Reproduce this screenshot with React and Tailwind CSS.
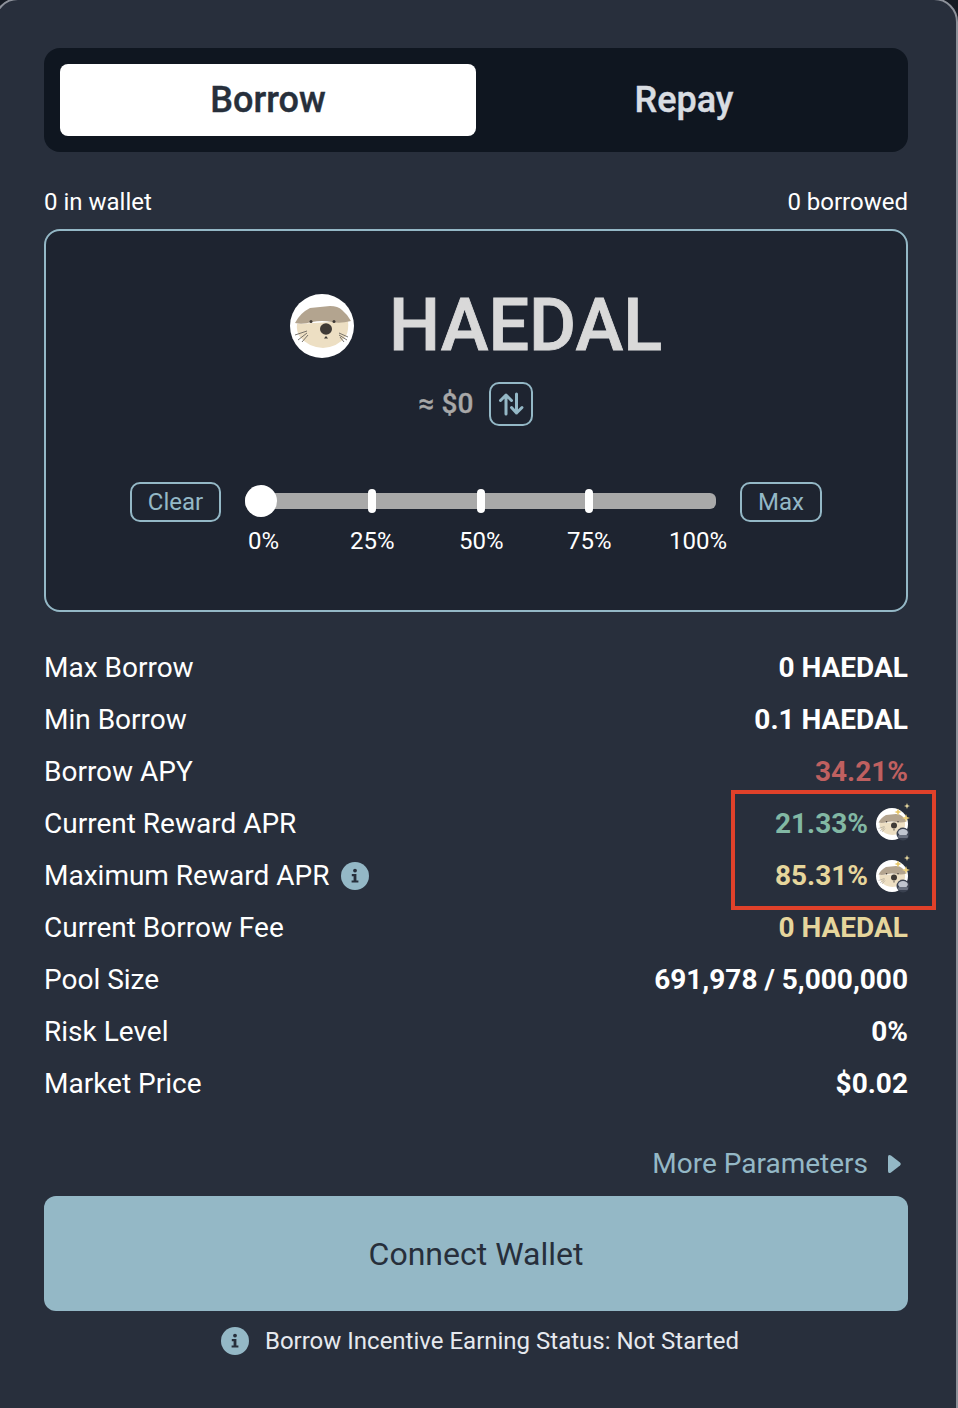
const F = { fontFamily: "Roboto, sans-serif" };

function Otter({ size, whisker = "#6a655f" }) {
  return (
    <svg width={size} height={size} viewBox="0 0 64 64" className="shrink-0 block">
      <circle cx="32" cy="32" r="32" fill="#ffffff" />
      <path d="M7 30 L58 27 Q59 36 56 42 Q48 53 33 54 Q18 53 10 43 Q6 37 7 30 Z" fill="#eddfc3" />
      <path d="M5 29 Q10 19 20 14 Q30 13 40 12 Q48 12 52 16 Q58 21 61 27 Q50 30 42 28 Q32 26 22 28 Q12 31 5 29 Z" fill="#b3a48f" />
      <circle cx="21" cy="27.5" r="1.5" fill="#3f3a36" />
      <circle cx="44" cy="27.5" r="1.5" fill="#3f3a36" />
      <ellipse cx="36" cy="35" rx="6" ry="5.8" fill="#3f3a36" />
      <path d="M34 44.5 L36 42 L38 44.5 Z" fill="#3f3a36" />
      <g stroke={whisker} strokeWidth="0.9" fill="none">
        <path d="M5 41 L17 37" />
        <path d="M8 46 L17 39" />
        <path d="M12 48 L18 41" />
        <path d="M49 39 L58 43" />
        <path d="M49 41 L57 46" />
        <path d="M50 43 L54 48" />
      </g>
    </svg>
  );
}

function RewardIcon() {
  return (
    <span className="relative block w-[32px] h-[32px] shrink-0">
      <Otter size={32} whisker="#8d877e" />
      <svg width="32" height="32" viewBox="0 0 32 32" className="absolute left-0 top-0 overflow-visible">
        <path d="M22 0.5 l1 2.5 l2.5 1 l-2.5 1 l-1 2.5 l-1 -2.5 l-2.5 -1 l2.5 -1 Z" fill="#e8c76a" />
        <path d="M30 6 l1 3 l3 1 l-3 1 l-1 3 l-1 -3 l-3 -1 l3 -1 Z" fill="#efd27a" />
        <path d="M31 -5 l0.8 2.2 l2.2 0.8 l-2.2 0.8 l-0.8 2.2 l-0.8 -2.2 l-2.2 -0.8 l2.2 -0.8 Z" fill="#e8d9a0" />
        <circle cx="27" cy="26" r="6.5" fill="#3a4150" />
        <ellipse cx="27" cy="24.5" rx="4.8" ry="3.4" fill="#c0c5cf" />
        <rect x="22" y="27" width="10" height="3" rx="1.2" fill="#6a7180" />
      </svg>
    </span>
  );
}

function InfoIcon() {
  return (
    <svg width="28" height="28" viewBox="0 0 28 28" className="shrink-0">
      <circle cx="14" cy="14" r="14" fill="#94b8c6" />
      <circle cx="14" cy="8.6" r="1.9" fill="#272f3b" />
      <path d="M10.8 12 h4.6 v6.4 h2 v2.2 h-6.8 v-2.2 h2 v-4.2 h-1.8 Z" fill="#272f3b" />
    </svg>
  );
}

function Row({ label, children, labelExtra, valueClass = "text-white" }) {
  return (
    <div className="flex h-[52px] items-center justify-between">
      <div className="flex items-center gap-[12px] text-[28px] text-white">
        <span>{label}</span>
        {labelExtra}
      </div>
      <div className={`flex items-center text-[28px] font-bold ${valueClass}`}>{children}</div>
    </div>
  );
}

function Tick({ left }) {
  return <span className="absolute top-[-4px] w-[8px] h-[24px] rounded-[4px] bg-white" style={{ left }} />;
}

export default function App() {
  return (
    <div style={F} className="relative w-[958px] h-[1408px] bg-[#161b24] overflow-hidden">
      <div className="-ml-[6px] -mt-[2px] w-[964px] h-[1440px] bg-[#282f3c] rounded-[24px] border-2 border-[#8d919a] px-[48px] pt-[48px]">
        <div className="flex p-[16px] h-[104px] rounded-[16px] bg-[#0f1620]">
          <div className="flex-1 flex items-center justify-center rounded-[8px] bg-white text-[36px] font-medium text-[#272f3b] [-webkit-text-stroke:0.4px_#272f3b]">Borrow</div>
          <div className="flex-1 flex items-center justify-center rounded-[8px] text-[36px] font-medium text-[#d9dde2] [-webkit-text-stroke:0.4px_#d9dde2]">Repay</div>
        </div>

        <div className="flex justify-between mt-[34px] h-[32px] items-center text-[24px] text-white">
          <span>0 in wallet</span>
          <span>0 borrowed</span>
        </div>

        <div className="mt-[11px] h-[383px] rounded-[16px] border-2 border-[#94b8c6] bg-[#1e2430] flex flex-col items-center">
          <div className="flex items-center gap-[35px] mt-[63px] h-[64px]">
            <Otter size={64} />
            <span className="text-[72px] font-medium text-[#d9d9d9] leading-none [-webkit-text-stroke:0.8px_#d9d9d9]">HAEDAL</span>
          </div>
          <div className="flex items-center gap-[16px] mt-[24px] text-[28px] font-medium text-[#a8a8a8] [-webkit-text-stroke:0.3px_#a8a8a8]">
            <span>≈ $0</span>
            <span className="w-[44px] h-[44px] rounded-[10px] border-2 border-[#94b8c6] flex items-center justify-center">
              <svg width="28" height="28" viewBox="0 0 28 28" fill="none" stroke="#94b8c6" strokeWidth="3" strokeLinecap="round" strokeLinejoin="round">
                <path d="M9 24 V5 M3.5 10.5 L9 5 L14.5 10.5" />
                <path d="M19.5 4 V23 M14.5 17.5 L19.5 23 L25 17.5" />
              </svg>
            </span>
          </div>
          <div className="flex items-start mt-[56px] h-[76px] w-[692px]">
            <span className="w-[91px] h-[40px] rounded-[10px] border-2 border-[#94b8c6] flex items-center justify-center text-[24px] text-[#94b8c6]">Clear</span>
            <div className="relative w-[471px] h-[72px] ml-[24px]">
              <div className="absolute left-0 right-0 top-[11px] h-[16px] rounded-[6px] bg-[#a9a9a9]">
                <Tick left={123} />
                <Tick left={232} />
                <Tick left={340} />
              </div>
              <span className="absolute left-0 top-[3px] w-[32px] h-[32px] rounded-full bg-white" />
              <div className="absolute top-[44px] left-0 right-0 text-[24px] text-white leading-[30px]">
                <span className="absolute left-[3px]">0%</span>
                <span className="absolute left-[105px]">25%</span>
                <span className="absolute left-[214px]">50%</span>
                <span className="absolute left-[322px]">75%</span>
                <span className="absolute left-[424px]">100%</span>
              </div>
            </div>
            <span className="ml-[24px] w-[82px] h-[40px] rounded-[10px] border-2 border-[#94b8c6] flex items-center justify-center text-[24px] text-[#94b8c6]">Max</span>
          </div>
        </div>

        <div className="mt-[30px]">
          <Row label="Max Borrow">0 HAEDAL</Row>
          <Row label="Min Borrow">0.1 HAEDAL</Row>
          <Row label="Borrow APY" valueClass="text-[#bf6060]">34.21%</Row>
          <Row label="Current Reward APR" valueClass="text-[#82b8a4]">
            <span>21.33%</span>
            <span className="ml-[8px]"><RewardIcon /></span>
          </Row>
          <Row label="Maximum Reward APR" labelExtra={<InfoIcon />} valueClass="text-[#e6d69c]">
            <span>85.31%</span>
            <span className="ml-[8px]"><RewardIcon /></span>
          </Row>
          <Row label="Current Borrow Fee" valueClass="text-[#e6d69c]">0 HAEDAL</Row>
          <Row label="Pool Size">691,978 / 5,000,000</Row>
          <Row label="Risk Level">0%</Row>
          <Row label="Market Price">$0.02</Row>
        </div>

        <div className="flex justify-end items-center mt-[38px] h-[32px] pr-[7px] gap-[20px] text-[28px] text-[#94b8c6]">
          <span>More Parameters</span>
          <svg width="13" height="20" viewBox="0 0 13 20"><path d="M0 3 Q0 0 3 1.5 L12 8.5 Q13.5 10 12 11.5 L3 18.5 Q0 20 0 17 Z" fill="#94b8c6" /></svg>
        </div>

        <div className="mt-[16px] h-[115px] rounded-[12px] bg-[#94b8c6] flex items-center justify-center text-[32px] text-[#272f3b]">Connect Wallet</div>

        <div className="flex items-center justify-center gap-[16px] mt-[14px] h-[32px] pl-[8px] text-[24px] text-[#e6e9ee]">
          <InfoIcon />
          <span>Borrow Incentive Earning Status: Not Started</span>
        </div>
      </div>

      <div className="absolute left-[731px] top-[790px] w-[205px] h-[120px] border-[4px] border-[#e0412a] pointer-events-none" />
    </div>
  );
}
